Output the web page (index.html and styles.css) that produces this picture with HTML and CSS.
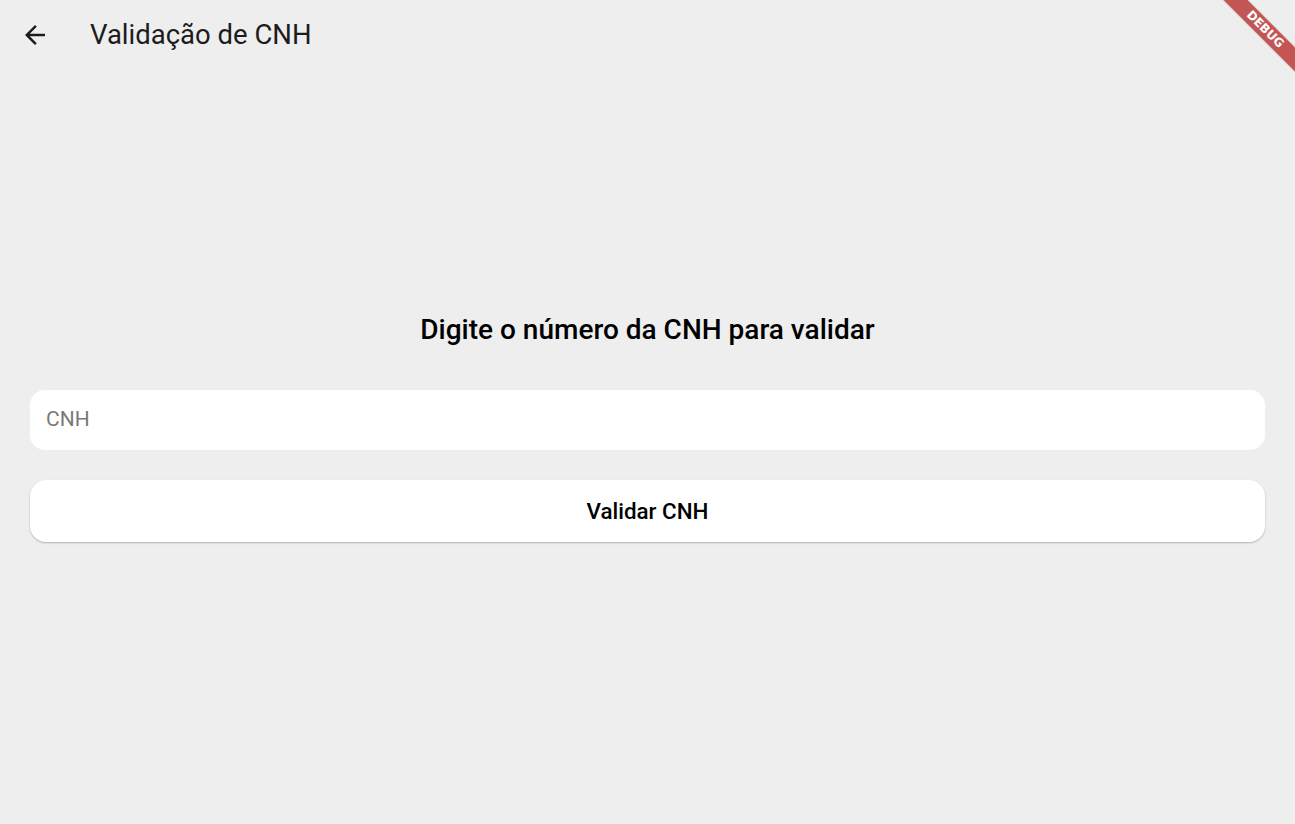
FILE: index.html
```html
<!DOCTYPE html>
<html lang="pt">
<head>
<meta charset="utf-8">
<link rel="stylesheet" href="styles.css">
</head>
<body>
<div class="app">
  <header class="appbar">
    <button class="back" aria-label="Voltar">
      <svg width="30" height="30" viewBox="0 0 24 24"><path d="M20 11H7.83l5.59-5.59L12 4l-8 8 8 8 1.41-1.41L7.83 13H20v-2z" fill="#1d1b20"/></svg>
    </button>
    <h1 class="title">Validação de CNH</h1>
  </header>
  <main class="content">
    <h2 class="heading">Digite o número da CNH para validar</h2>
    <div class="field"><span class="placeholder">CNH</span></div>
    <button class="submit">Validar CNH</button>
  </main>
  <div class="debug"><span>DEBUG</span></div>
</div>
</body>
</html>
```
FILE: styles.css
```css
* { box-sizing: border-box; }
html, body { margin: 0; padding: 0; }
body {
  background: #eeeeee;
  font-family: Roboto, "Noto Sans", sans-serif;
  color: #000;
  width: 1295px;
  height: 824px;
  overflow: hidden;
}
.app {
  position: relative;
  height: 824px;
  display: flex;
  flex-direction: column;
}
.appbar {
  height: 69px;
  display: flex;
  align-items: center;
  padding-left: 20px;
  flex: none;
}
.back {
  width: 30px;
  height: 30px;
  padding: 0;
  border: 0;
  background: none;
  display: flex;
}
.title {
  margin: 0 0 0 40px;
  font-size: 27.5px;
  font-weight: 400;
  color: #1d1b20;
}
.content {
  flex: 1;
  display: flex;
  flex-direction: column;
  justify-content: center;
  align-items: stretch;
  padding: 0 30px 40px;
}
.heading {
  margin: 0 0 42px;
  text-align: center;
  font-size: 28px;
  font-weight: 500;
  line-height: 36px;
}
.field {
  height: 60px;
  background: #fff;
  border-radius: 15px;
  display: flex;
  align-items: center;
  padding-left: 16px;
}
.placeholder {
  font-size: 21px;
  color: #7a7a7a;
  margin-top: -2px;
}
.submit {
  margin-top: 30px;
  height: 62px;
  border: 0;
  background: #fff;
  border-radius: 16px;
  box-shadow: 0 1px 2px rgba(0,0,0,0.25);
  font-family: inherit;
  font-size: 22.4px;
  font-weight: 500;
  color: #000;
}
.debug {
  position: absolute;
  top: 0;
  right: 0;
  width: 100px;
  height: 100px;
  overflow: hidden;
}
.debug span {
  position: absolute;
  top: 21px;
  left: 10px;
  width: 120px;
  height: 17px;
  transform: rotate(45deg);
  background: rgba(184, 46, 46, 0.8);
  box-shadow: 0 0 2px rgba(0,0,0,0.2);
  color: #fff;
  font-family: "DejaVu Sans", sans-serif;
  font-weight: 700;
  font-size: 12px;
  text-align: center;
  line-height: 17px;
}
```
